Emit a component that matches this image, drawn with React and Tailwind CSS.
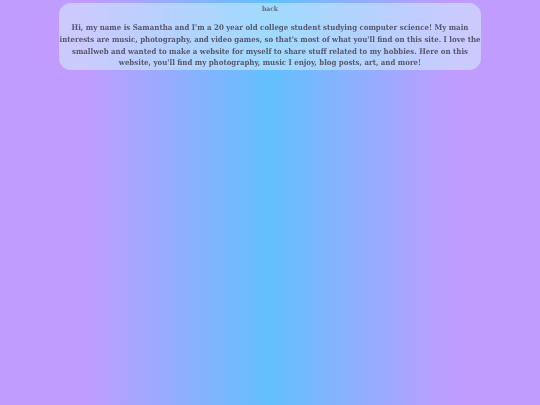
import React from "react";

export default function App() {
    return (
        <div className="min-h-screen w-full pt-[3px]">
            <div className="fixed inset-0 -z-10 bg-[linear-gradient(to_right,#c09cff_16%,#62c0fd_50%,#c09cff_84%)]" />
            <div className="mx-auto w-[422px] rounded-[12px] bg-[#d2f0ff]/55 pb-[1px] text-center font-['DejaVu_Serif',serif] font-stretch-condensed text-[#58586a]">
                <a href="#" className="block pt-[1px] text-[6.8px] leading-[10px] font-bold text-[#676b7a]">
                    back
                </a>
                <p className="mt-[8px] whitespace-nowrap text-[7.8px] leading-[11.8px] font-bold">
                    Hi, my name is Samantha and I'm a 20 year old college student studying computer science! My main
                    <br />
                    interests are music, photography, and video games, so that's most of what you'll find on this site. I love the
                    <br />
                    smallweb and wanted to make a website for myself to share stuff related to my hobbies. Here on this
                    <br />
                    website, you'll find my photography, music I enjoy, blog posts, art, and more!
                </p>
            </div>
        </div>
    );
}
